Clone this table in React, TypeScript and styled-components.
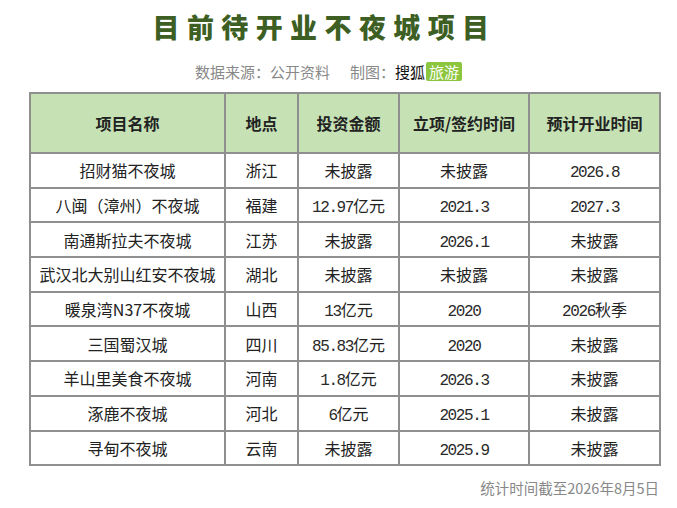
import React from "react";
import styled, { createGlobalStyle } from "styled-components";

const Global = createGlobalStyle`
  html, body { margin: 0; padding: 0; background: #ffffff; }
  body { font-family: "Noto Sans CJK SC", "Noto Sans", sans-serif; }
`;

const Page = styled.div`
  width: 677px;
  height: 508px;
  box-sizing: border-box;
  padding: 6px 19px 0 29px;
  display: flex;
  flex-direction: column;
`;

const Title = styled.h1`
  margin: 0 38px 0 0;
  height: 42px;
  line-height: 42px;
  text-align: center;
  font-family: "Noto Sans CJK SC", sans-serif;
  font-weight: 900;
  font-size: 27px;
  letter-spacing: 7.4px;
  color: #3d5f24;
`;

const Sub = styled.div`
  height: 30px;
  display: flex;
  align-items: center;
  justify-content: center;
  margin-right: 30px;
  margin-top: 8px;
  font-size: 15px;
  color: #888888;
`;

const Gap = styled.span`
  display: inline-block;
  width: 20px;
`;

const Brand = styled.span`
  color: #111;
`;

const Badge = styled.span`
  background: #8cc63e;
  color: #fff;
  border-radius: 2px;
  padding: 0 3px;
  margin-left: 1px;
  line-height: 19px;
`;

const Table = styled.table`
  margin-top: 6px;
  width: 630px;
  border-collapse: collapse;
  table-layout: fixed;
  border: 2px solid #8f8f8f;
`;

const Th = styled.th`
  height: 58px;
  background: #c6e2b5;
  border: 2px solid #8f8f8f;
  font-size: 16px;
  font-weight: 700;
  color: #222;
  text-align: center;
  padding: 0;
`;

const Td = styled.td`
  height: 32.7px;
  border: 2px solid #8f8f8f;
  font-size: 16px;
  color: #222;
  text-align: center;
  padding: 0;
  white-space: nowrap;
  font-family: "Noto Sans CJK SC", sans-serif;
`;

const Mono = styled.span`
  font-family: "Liberation Mono", monospace;
  letter-spacing: -1.4px;
  font-weight: 400;
  color: #2a2a2a;
`;

const Footer = styled.div`
  margin-top: 11px;
  width: 630px;
  text-align: right;
  font-size: 14.5px;
  color: #888888;
`;

const cols = [195, 73, 101, 130, 131];
const headers = ["项目名称", "地点", "投资金额", "立项/签约时间", "预计开业时间"];
const rows: string[][] = [
  ["招财猫不夜城", "浙江", "未披露", "未披露", "2026.8"],
  ["八闽（漳州）不夜城", "福建", "12.97亿元", "2021.3", "2027.3"],
  ["南通斯拉夫不夜城", "江苏", "未披露", "2026.1", "未披露"],
  ["武汉北大别山红安不夜城", "湖北", "未披露", "未披露", "未披露"],
  ["暖泉湾N37不夜城", "山西", "13亿元", "2020", "2026秋季"],
  ["三国蜀汉城", "四川", "85.83亿元", "2020", "未披露"],
  ["羊山里美食不夜城", "河南", "1.8亿元", "2026.3", "未披露"],
  ["涿鹿不夜城", "河北", "6亿元", "2025.1", "未披露"],
  ["寻甸不夜城", "云南", "未披露", "2025.9", "未披露"],
];

function Cell({ text, col }: { text: string; col: number }) {
  if (col < 2) return <Td>{text}</Td>;
  const m = text.match(/^([0-9.]+)(.*)$/);
  if (!m) return <Td>{text}</Td>;
  return (
    <Td>
      <Mono>{m[1]}</Mono>
      {m[2]}
    </Td>
  );
}

export default function App() {
  return (
    <>
      <Global />
      <Page>
        <Title>目前待开业不夜城项目</Title>
        <Sub>
          数据来源：公开资料<Gap />制图：<Brand>搜狐</Brand>
          <Badge>旅游</Badge>
        </Sub>
        <Table>
          <colgroup>
            {cols.map((w, i) => (
              <col key={i} style={{ width: w }} />
            ))}
          </colgroup>
          <thead>
            <tr>
              {headers.map((h) => (
                <Th key={h}>{h}</Th>
              ))}
            </tr>
          </thead>
          <tbody>
            {rows.map((r, ri) => (
              <tr key={ri}>
                {r.map((c, ci) => (
                  <Cell key={ci} text={c} col={ci} />
                ))}
              </tr>
            ))}
          </tbody>
        </Table>
        <Footer>统计时间截至2026年8月5日</Footer>
      </Page>
    </>
  );
}
